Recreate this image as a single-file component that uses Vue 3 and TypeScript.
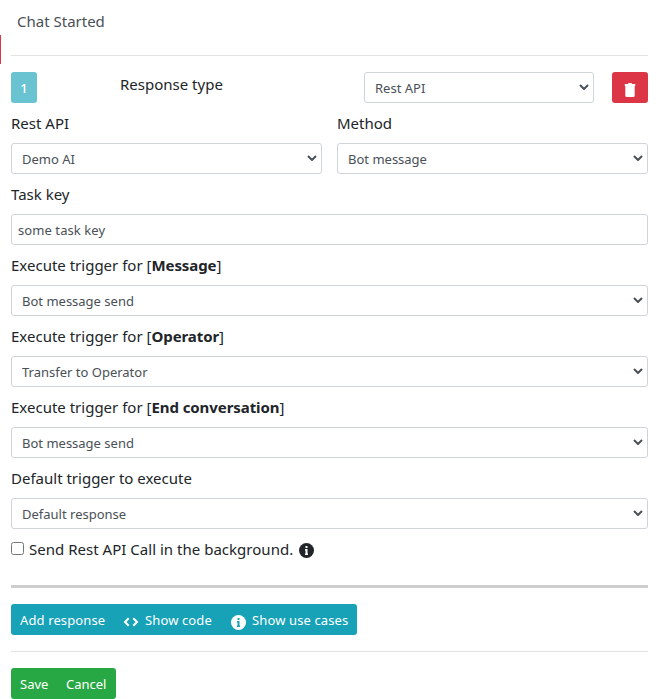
<script setup lang="ts">
import { ref } from 'vue'

interface TriggerField {
  id: string
  label: string
  event?: string
  value: string
}

const responseType = ref('Rest API')
const restApi = ref('Demo AI')
const method = ref('Bot message')
const taskKey = ref('some task key')
const background = ref(false)
const triggers = ref<TriggerField[]>([
  { id: 'message', label: 'Execute trigger for', event: 'Message', value: 'Bot message send' },
  { id: 'operator', label: 'Execute trigger for', event: 'Operator', value: 'Transfer to Operator' },
  { id: 'end', label: 'Execute trigger for', event: 'End conversation', value: 'Bot message send' },
  { id: 'default', label: 'Default trigger to execute', value: 'Default response' },
])
</script>

<template>
  <div class="page">
    <span class="edge"></span>
    <header class="title">Chat Started</header>
    <hr class="rule" />

    <div class="head">
      <div class="badge-cell"><span class="badge">1</span></div>
      <label class="type-label" for="type">Response type</label>
      <div class="select type-select">
        <select id="type" v-model="responseType"><option>Rest API</option></select>
        <svg class="chevron" viewBox="0 0 10 6"><path d="M1 1l4 4 4-4" /></svg>
      </div>
      <button class="delete" type="button" aria-label="Delete">
        <svg width="12" height="14" viewBox="0 0 12 14"><path d="M.7 1H4l.6-1h2.8L8 1h3.300v1.700H10.700V12.500q0 1.500-1.500 1.500H2.800q-1.500 0-1.500-1.500V2.700H.7z" /></svg>
      </button>
    </div>

    <div class="columns">
      <div class="field">
        <label for="rest">Rest API</label>
        <div class="select">
          <select id="rest" v-model="restApi"><option>Demo AI</option></select>
          <svg class="chevron" viewBox="0 0 10 6"><path d="M1 1l4 4 4-4" /></svg>
        </div>
      </div>
      <div class="field">
        <label for="method">Method</label>
        <div class="select">
          <select id="method" v-model="method"><option>Bot message</option></select>
          <svg class="chevron" viewBox="0 0 10 6"><path d="M1 1l4 4 4-4" /></svg>
        </div>
      </div>
    </div>

    <div class="field">
      <label for="task">Task key</label>
      <input id="task" v-model="taskKey" class="text" type="text" />
    </div>

    <div v-for="t in triggers" :key="t.id" class="field">
      <label :for="t.id">{{ t.label }}<template v-if="t.event"> [<b>{{ t.event }}</b>]</template></label>
      <div class="select">
        <select :id="t.id" v-model="t.value"><option>{{ t.value }}</option></select>
        <svg class="chevron" viewBox="0 0 10 6"><path d="M1 1l4 4 4-4" /></svg>
      </div>
    </div>

    <div class="check">
      <input id="bg" v-model="background" type="checkbox" />
      <label for="bg">Send Rest API Call in the background.</label>
      <svg class="info" width="15" height="15" viewBox="0 0 15 15"><circle cx="7.500" cy="7.500" r="7.500" /><path class="mark" d="M6.500 3h2v2h-2zM6 6h2.500v4.500H9V12H6v-1.500h.5v-3H6z" /></svg>
    </div>

    <hr class="thick" />

    <div class="group info-group">
      <button type="button" class="add">Add response</button>
      <button type="button" class="code">
        <svg class="brackets" width="16" height="10" viewBox="0 0 16 10"><path d="M5.700 1.300L2 5l3.700 3.700M10.300 1.300L14 5l-3.700 3.700" /></svg>
        Show code
      </button>
      <button type="button" class="cases">
        <svg class="info" width="15" height="15" viewBox="0 0 15 15"><circle cx="7.500" cy="7.500" r="7.500" /><path class="mark" d="M6.500 3h2v2h-2zM6 6h2.500v4.500H9V12H6v-1.500h.5v-3H6z" /></svg>
        Show use cases
      </button>
    </div>

    <hr class="rule" />

    <div class="group save-group">
      <button type="button" class="save">Save</button>
      <button type="button" class="cancel">Cancel</button>
    </div>
  </div>
</template>

<style>
body { margin: 0; background: #fff; overflow: hidden; }
</style>

<style scoped>
* { box-sizing: border-box; }
.page {
  position: relative;
  height: 699px;
  padding: 0 22px 0 11px;
  color: #212529;
  font: 15px/24px "Noto Sans", "Open Sans", sans-serif;
}
.edge { position: absolute; left: 0; top: 35px; width: 1px; height: 29px; background: #dc3545; }
.title { height: 55px; padding: 9px 0 0 6px; color: #495057; font-size: 15px; }
hr { border: 0; margin: 0; }
.rule { height: 1px; margin-bottom: 16px; background: #e2e2e2; }
.head { display: grid; grid-template-columns: 109px 244px 230px 36px; height: 39px; }
.head > :last-child { margin-left: 18px; width: 36px; }
.badge {
  display: flex; align-items: center; justify-content: center;
  width: 26px; height: 31px; border-radius: 3px;
  background: #6ac3d0; color: #fff; font-size: 13px; font-weight: 500;
}
.delete {
  display: flex; justify-content: center; height: 31px; padding: 11px 0 0;
  border: 0; border-radius: 3px; background: #dc3545;
}
.delete svg { fill: #fff; }
.columns { display: grid; grid-template-columns: 1fr 1fr; gap: 15px; }
.field { height: 71px; }
.field > label { display: block; height: 24px; margin-bottom: 8px; white-space: nowrap; }
.field b { letter-spacing: -0.08px; }
.select { display: grid; height: 31px; }
.select > * { grid-area: 1 / 1; }
select, .text {
  appearance: none; width: 100%; height: 31px; margin: 0; padding: 2px 10px 0;
  border: 1px solid #ced4da; border-radius: 3px; background: #fff;
  color: #495057; font: 13px/21px "Noto Sans", "Open Sans", sans-serif;
}
.text { padding: 0 6px; letter-spacing: 0.08px; }
.chevron {
  align-self: center; justify-self: end; width: 10px; height: 6px; margin: 0 5px 1px 0;
  fill: none; stroke: #495057; stroke-width: 2; pointer-events: none;
}
.check { display: flex; align-items: flex-start; height: 48px; letter-spacing: 0.02px; }
.check input { width: 13px; height: 13px; margin: 5px 5px 0 0; }
.info { flex: none; fill: currentColor; }
.mark { fill: #fff; }
.check .info { margin: 6px 0 0 6px; }
.thick { height: 3px; margin-bottom: 16px; background: #cdcdcd; }
.group { display: flex; height: 31px; border-radius: 3px; overflow: hidden; }
.info-group { width: 346px; margin-bottom: 16px; background: #17a2b8; }
.save-group { width: 105px; background: #28a745; }
.group button {
  display: flex; align-items: center; height: 31px; padding: 2px 0 0 9px; border: 0;
  background: transparent; color: #fff; white-space: nowrap; letter-spacing: 0.12px;
  font: 13px/21px "Noto Sans", "Open Sans", sans-serif;
}
.add { width: 103px; }
.code { width: 108px; }
.cases { width: 135px; }
.group .save, .group .cancel { letter-spacing: 0; }
.save { width: 46px; }
.brackets { margin: 2px 6px 0 0; fill: none; stroke: #fff; stroke-width: 2; }
.cases .info { margin: 3px 6px 0 0; }
.cases .mark { fill: #17a2b8; }
</style>
